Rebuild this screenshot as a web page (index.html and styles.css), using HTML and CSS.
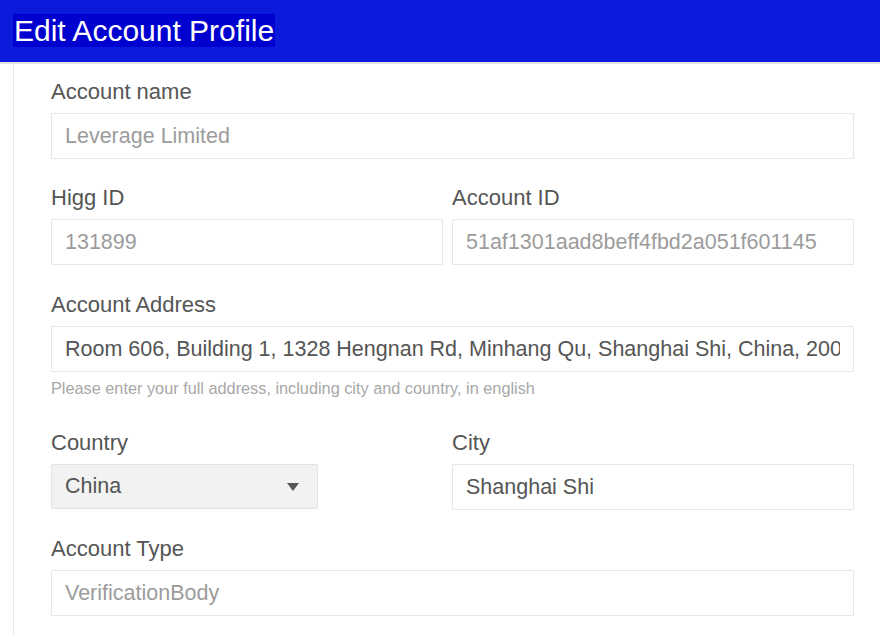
FILE: index.html
```html
<!DOCTYPE html>
<html lang="en">
<head>
<meta charset="utf-8">
<title>Edit Account Profile</title>
<link rel="stylesheet" href="styles.css">
</head>
<body>
<header class="topbar">
  <h1 class="title"><span class="title-hl">Edit Account Profile</span></h1>
</header>
<main class="page">
  <div class="field">
    <label class="label" for="acc-name">Account name</label>
    <input class="input readonly" id="acc-name" value="Leverage Limited" readonly>
  </div>
  <div class="row row-ids">
    <div class="field col-left">
      <label class="label" for="higg-id">Higg ID</label>
      <input class="input readonly" id="higg-id" value="131899" readonly>
    </div>
    <div class="field">
      <label class="label" for="acc-id">Account ID</label>
      <input class="input readonly" id="acc-id" value="51af1301aad8beff4fbd2a051f601145" readonly>
    </div>
  </div>
  <div class="field field-help">
    <label class="label" for="acc-addr">Account Address</label>
    <input class="input" id="acc-addr" value="Room 606, Building 1, 1328 Hengnan Rd, Minhang Qu, Shanghai Shi, China, 200000">
    <div class="help">Please enter your full address, including city and country, in english</div>
  </div>
  <div class="row">
    <div class="field">
      <label class="label">Country</label>
      <div class="select">
        <span class="select-value">China</span>
        <svg class="caret" width="12" height="8" viewBox="0 0 12 8"><path d="M0 0H12L6 8Z" fill="#555"/></svg>
      </div>
    </div>
    <div class="field">
      <label class="label" for="city">City</label>
      <input class="input" id="city" value="Shanghai Shi">
    </div>
  </div>
  <div class="field field-last">
    <label class="label" for="acc-type">Account Type</label>
    <input class="input readonly" id="acc-type" value="VerificationBody" readonly>
  </div>
</main>
</body>
</html>
```
FILE: styles.css
```css
html, body {
  margin: 0;
  padding: 0;
  background: #ffffff;
  font-family: "Liberation Sans", Arial, sans-serif;
}
body {
  width: 880px;
  height: 635px;
  overflow: hidden;
}
.topbar {
  height: 62px;
  background: #0b1bdc;
  border-bottom: 2px solid #e4e4e4;
  display: flex;
  align-items: center;
  padding-left: 13px;
}
.title {
  margin: 0;
  font-weight: normal;
  font-size: 30px;
  line-height: 34px;
  color: #ffffff;
}
.title-hl {
  background: #0000cf;
  padding: 0 1px;
}
.page {
  box-sizing: border-box;
  height: 571px;
  margin-left: 13px;
  border-left: 1px solid #e8e8e8;
  padding: 13px 26px 0 37px;
}
.field {
  display: flex;
  flex-direction: column;
  margin-bottom: 24px;
}
.row-ids .field {
  margin-bottom: 25px;
}
.field-help {
  margin-bottom: 30px;
}
.field-last {
  margin-bottom: 0;
}
.label {
  font-size: 22px;
  line-height: 26px;
  padding-top: 2px;
  color: #555555;
  margin-bottom: 8px;
}
.input {
  display: block;
  box-sizing: border-box;
  width: 100%;
  height: 46px;
  margin: 0;
  border: 1px solid #e6e6e6;
  border-radius: 1px;
  padding: 0 13px;
  font-family: "Liberation Sans", Arial, sans-serif;
  font-size: 21.5px;
  color: #555555;
  background: #ffffff;
  outline: none;
}
.readonly {
  color: #9c9c9c;
}
.help {
  margin-top: 7px;
  font-size: 16.3px;
  line-height: 19px;
  color: #a8a8a8;
}
.row {
  display: grid;
  grid-template-columns: 401px 1fr;
}
.col-left .input {
  width: calc(100% - 9px);
}
.select {
  box-sizing: border-box;
  width: 267px;
  height: 45px;
  border: 1px solid #e2e2e2;
  border-radius: 2px;
  background: #f2f2f2;
  padding: 0 13px;
  display: flex;
  align-items: center;
  justify-content: space-between;
  font-size: 21.5px;
  color: #555555;
}
.caret {
  margin-right: 5px;
}
```
